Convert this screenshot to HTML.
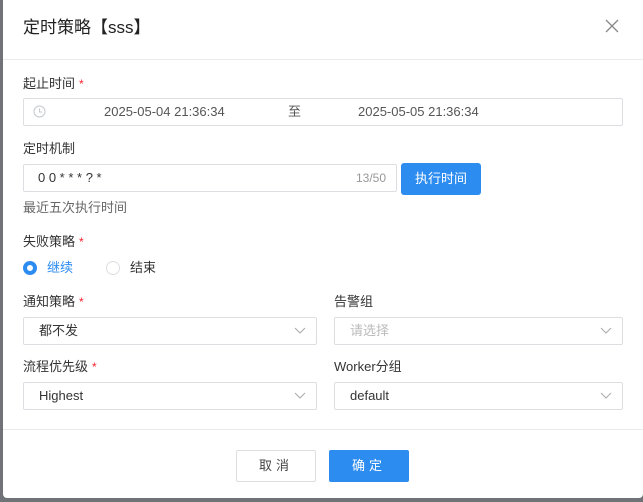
<!DOCTYPE html><html><head><meta charset="utf-8"><style>
*{box-sizing:border-box;margin:0;padding:0}
body{width:643px;height:502px;background:#6f7378;position:relative;overflow:hidden;font-family:"Liberation Sans","Noto Sans CJK SC",sans-serif;font-size:13px;color:#333}
.dlg{position:absolute;left:3px;top:0;width:640px;height:498px;background:#fff;border-radius:0 0 4px 4px}
.a{position:absolute}
.lbl{position:absolute;font-size:13px;color:#333;line-height:18px;white-space:nowrap}
.req{color:#f5222d;margin-left:4px;font-size:12px;vertical-align:top}
.box{position:absolute;border:1px solid #dcdee2;border-radius:2px;height:28px;background:#fff}
.txt{position:absolute;font-size:13px;top:0;line-height:26px;white-space:nowrap}
.chev{position:absolute;right:10px;top:9px;width:12px;height:8px}
</style></head><body><div class="dlg">
<div class="a" style="left:20px;top:17px;font-size:17px;line-height:22px;color:#222">定时策略【sss】</div>
<svg class="a" style="left:602px;top:19px" width="14" height="14"><path d="M1 1L13 13M13 1L1 13" stroke="#888" stroke-width="1.3"/></svg>
<div class="a" style="left:0;top:59px;width:640px;height:1px;background:#e8eaec"></div>

<div class="lbl" style="left:20px;top:75px">起止时间<span class="req">*</span></div>
<div class="box" style="left:20px;top:98px;width:600px">
<svg class="a" style="left:9px;top:6px" width="13" height="13"><circle cx="6.5" cy="6.5" r="5.5" fill="none" stroke="#c5c8ce"/><path d="M6.5 3.5V7H9" fill="none" stroke="#c5c8ce"/></svg>
<div class="txt" style="left:80px;color:#555">2025-05-04 21:36:34</div>
<div class="txt" style="left:264px;color:#555">至</div>
<div class="txt" style="left:334px;color:#555">2025-05-05 21:36:34</div></div>

<div class="lbl" style="left:20px;top:140px">定时机制</div>
<div class="box" style="left:20px;top:164px;width:374px">
<div class="txt" style="left:14px">0 0 * * * ? *</div>
<div class="txt" style="left:332px;color:#999;font-size:12px">13/50</div></div>
<div class="a" style="left:398px;top:163px;width:80px;height:32px;background:#2d8cf0;border-radius:3px;color:#fff;text-align:center;line-height:32px;font-size:13px">执行时间</div>
<div class="lbl" style="left:20px;top:199px;color:#666">最近五次执行时间</div>

<div class="lbl" style="left:20px;top:233px">失败策略<span class="req">*</span></div>
<div class="a" style="left:20px;top:261px;width:14px;height:14px;border-radius:50%;border:4px solid #2d8cf0;background:#fff"></div>
<div class="lbl" style="left:44px;top:259px;color:#2d8cf0">继续</div>
<div class="a" style="left:103px;top:261px;width:14px;height:14px;border-radius:50%;border:1px solid #dcdee2"></div>
<div class="lbl" style="left:127px;top:259px">结束</div>

<div class="lbl" style="left:20px;top:293px">通知策略<span class="req">*</span></div>
<div class="lbl" style="left:331px;top:293px">告警组</div>
<div class="box" style="left:20px;top:317px;width:294px"><div class="txt" style="left:15px">都不发</div><svg class="chev"><path d="M1 1L6 6L11 1" fill="none" stroke="#aaa"/></svg></div>
<div class="box" style="left:331px;top:317px;width:289px"><div class="txt" style="left:15px;color:#bbb">请选择</div><svg class="chev"><path d="M1 1L6 6L11 1" fill="none" stroke="#aaa"/></svg></div>

<div class="lbl" style="left:20px;top:358px">流程优先级<span class="req">*</span></div>
<div class="lbl" style="left:331px;top:358px">Worker分组</div>
<div class="box" style="left:20px;top:382px;width:294px"><div class="txt" style="left:15px">Highest</div><svg class="chev"><path d="M1 1L6 6L11 1" fill="none" stroke="#aaa"/></svg></div>
<div class="box" style="left:331px;top:382px;width:289px"><div class="txt" style="left:15px">default</div><svg class="chev"><path d="M1 1L6 6L11 1" fill="none" stroke="#aaa"/></svg></div>

<div class="a" style="left:0;top:429px;width:640px;height:1px;background:#e8eaec"></div>
<div class="a" style="left:233px;top:450px;width:80px;height:32px;border:1px solid #dcdee2;border-radius:2px;text-align:center;line-height:30px;letter-spacing:4px;color:#444">取消</div>
<div class="a" style="left:326px;top:450px;width:80px;height:32px;background:#2d8cf0;border-radius:2px;text-align:center;line-height:32px;letter-spacing:4px;color:#fff">确定</div>
</div></body></html>
